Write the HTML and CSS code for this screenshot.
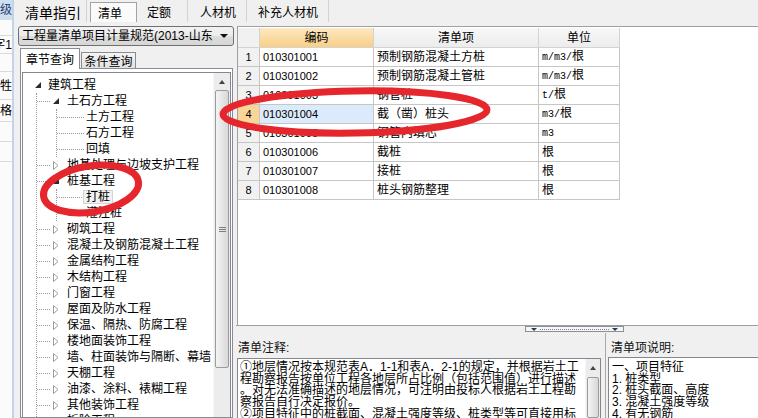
FILE: index.html
```html
<!DOCTYPE html>
<html lang="zh-CN">
<head>
<meta charset="utf-8">
<title>清单</title>
<link rel="stylesheet" href="styles.css">
</head>
<body>
<div class="app">
  <div class="stub">
    <div class="stub-cell s-top">级</div>
    <div class="stub-cell s-a"></div>
    <div class="stub-cell s-b">字1</div>
    <div class="stub-cell s-c"></div>
    <div class="stub-cell s-d">牲</div>
    <div class="stub-cell s-e">格</div>
    <div class="stub-cell s-f"></div>
    <div class="stub-cell s-f"></div>
  </div>
  <div class="main">
    <div class="tabbar">
      <div class="tab t1">清单指引</div>
      <div class="tab t2 active">清单</div>
      <div class="tab t3">定额</div>
      <div class="tab t4">人材机</div>
      <div class="tab t5">补充人材机</div>
    </div>
    <div class="content">
      <div class="left">
        <div class="combo"><span class="combo-text">工程量清单项目计量规范(2013-山东</span><span class="combo-arrow"></span></div>
        <div class="qtabs"><div class="qtab active">章节查询</div><div class="qtab">条件查询</div></div>
        <div class="tabpage">
          <div class="tree">
            <div class="tree-body">
              <div class="node l1"><span class="exp"><span class="tri-open"></span></span><span class="lbl">建筑工程</span></div>
              <div class="kids k1">
                <div class="node l2"><span class="hconn"></span><span class="exp"><span class="tri-open"></span></span><span class="lbl">土石方工程</span></div>
                <div class="kids k2">
                  <div class="node l3"><span class="conn"></span><span class="lbl">土方工程</span></div>
                  <div class="node l3"><span class="conn"></span><span class="lbl">石方工程</span></div>
                  <div class="node l3"><span class="conn"></span><span class="lbl">回填</span></div>
                </div>
                <div class="node l2"><span class="hconn"></span><span class="exp"><svg width="6" height="9" viewBox="0 0 6 9"><polygon points="0.5,0.5 5,4.5 0.5,8.5" fill="#fff" stroke="#9b9b9b"/></svg></span><span class="lbl">地基处理与边坡支护工程</span></div>
                <div class="node l2"><span class="hconn"></span><span class="exp"><span class="tri-open"></span></span><span class="lbl">桩基工程</span></div>
                <div class="kids k2">
                  <div class="node l3"><span class="conn"></span><span class="lbl sel">打桩</span></div>
                  <div class="node l3"><span class="conn"></span><span class="lbl">灌注桩</span></div>
                </div>
                <div class="node l2"><span class="hconn"></span><span class="exp"><svg width="6" height="9" viewBox="0 0 6 9"><polygon points="0.5,0.5 5,4.5 0.5,8.5" fill="#fff" stroke="#9b9b9b"/></svg></span><span class="lbl">砌筑工程</span></div>
                <div class="node l2"><span class="hconn"></span><span class="exp"><svg width="6" height="9" viewBox="0 0 6 9"><polygon points="0.5,0.5 5,4.5 0.5,8.5" fill="#fff" stroke="#9b9b9b"/></svg></span><span class="lbl">混凝土及钢筋混凝土工程</span></div>
                <div class="node l2"><span class="hconn"></span><span class="exp"><svg width="6" height="9" viewBox="0 0 6 9"><polygon points="0.5,0.5 5,4.5 0.5,8.5" fill="#fff" stroke="#9b9b9b"/></svg></span><span class="lbl">金属结构工程</span></div>
                <div class="node l2"><span class="hconn"></span><span class="exp"><svg width="6" height="9" viewBox="0 0 6 9"><polygon points="0.5,0.5 5,4.5 0.5,8.5" fill="#fff" stroke="#9b9b9b"/></svg></span><span class="lbl">木结构工程</span></div>
                <div class="node l2"><span class="hconn"></span><span class="exp"><svg width="6" height="9" viewBox="0 0 6 9"><polygon points="0.5,0.5 5,4.5 0.5,8.5" fill="#fff" stroke="#9b9b9b"/></svg></span><span class="lbl">门窗工程</span></div>
                <div class="node l2"><span class="hconn"></span><span class="exp"><svg width="6" height="9" viewBox="0 0 6 9"><polygon points="0.5,0.5 5,4.5 0.5,8.5" fill="#fff" stroke="#9b9b9b"/></svg></span><span class="lbl">屋面及防水工程</span></div>
                <div class="node l2"><span class="hconn"></span><span class="exp"><svg width="6" height="9" viewBox="0 0 6 9"><polygon points="0.5,0.5 5,4.5 0.5,8.5" fill="#fff" stroke="#9b9b9b"/></svg></span><span class="lbl">保温、隔热、防腐工程</span></div>
                <div class="node l2"><span class="hconn"></span><span class="exp"><svg width="6" height="9" viewBox="0 0 6 9"><polygon points="0.5,0.5 5,4.5 0.5,8.5" fill="#fff" stroke="#9b9b9b"/></svg></span><span class="lbl">楼地面装饰工程</span></div>
                <div class="node l2"><span class="hconn"></span><span class="exp"><svg width="6" height="9" viewBox="0 0 6 9"><polygon points="0.5,0.5 5,4.5 0.5,8.5" fill="#fff" stroke="#9b9b9b"/></svg></span><span class="lbl">墙、柱面装饰与隔断、幕墙</span></div>
                <div class="node l2"><span class="hconn"></span><span class="exp"><svg width="6" height="9" viewBox="0 0 6 9"><polygon points="0.5,0.5 5,4.5 0.5,8.5" fill="#fff" stroke="#9b9b9b"/></svg></span><span class="lbl">天棚工程</span></div>
                <div class="node l2"><span class="hconn"></span><span class="exp"><svg width="6" height="9" viewBox="0 0 6 9"><polygon points="0.5,0.5 5,4.5 0.5,8.5" fill="#fff" stroke="#9b9b9b"/></svg></span><span class="lbl">油漆、涂料、裱糊工程</span></div>
                <div class="node l2"><span class="hconn"></span><span class="exp"><svg width="6" height="9" viewBox="0 0 6 9"><polygon points="0.5,0.5 5,4.5 0.5,8.5" fill="#fff" stroke="#9b9b9b"/></svg></span><span class="lbl">其他装饰工程</span></div>
                <div class="node l2"><span class="hconn"></span><span class="exp"><svg width="6" height="9" viewBox="0 0 6 9"><polygon points="0.5,0.5 5,4.5 0.5,8.5" fill="#fff" stroke="#9b9b9b"/></svg></span><span class="lbl">拆除工程</span></div>
              </div>
            </div>
            <div class="vscroll tree-sb">
              <div class="sb-btn"><span class="up"></span></div>
              <div class="sb-thumb tree-thumb"><span class="grip"></span></div>
              <div class="sb-track"></div>
            </div>
          </div>
        </div>
      </div>
      <div class="right">
        <div class="grid-area">
          <table class="grid">
            <colgroup><col class="c0"><col class="c1"><col class="c2"><col class="c3"></colgroup>
            <thead>
              <tr><th class="rn"></th><th class="hl">编码</th><th>清单项</th><th>单位</th></tr>
            </thead>
            <tbody>
              <tr><td class="rn">1</td><td class="code">010301001</td><td>预制钢筋混凝土方桩</td><td><span class="mono">m/m3/</span>根</td></tr>
              <tr><td class="rn">2</td><td class="code">010301002</td><td>预制钢筋混凝土管桩</td><td><span class="mono">m/m3/</span>根</td></tr>
              <tr><td class="rn">3</td><td class="code">010301003</td><td>钢管桩</td><td><span class="mono">t/</span>根</td></tr>
              <tr class="cur"><td class="rn">4</td><td class="code">010301004</td><td>截（凿）桩头</td><td><span class="mono">m3/</span>根</td></tr>
              <tr><td class="rn">5</td><td class="code">010301005</td><td>钢管内填芯</td><td><span class="mono">m3</span></td></tr>
              <tr><td class="rn">6</td><td class="code">010301006</td><td>截桩</td><td>根</td></tr>
              <tr><td class="rn">7</td><td class="code">010301007</td><td>接桩</td><td>根</td></tr>
              <tr><td class="rn">8</td><td class="code">010301008</td><td>桩头钢筋整理</td><td>根</td></tr>
            </tbody>
          </table>
        </div>
        <div class="splitter">
          <div class="handle"><span class="down"></span><span class="dots"></span><span class="down"></span></div>
        </div>
        <div class="notes">
          <div class="note-left">
            <div class="note-label">清单注释:</div>
            <div class="note-box">
              <div class="note-text">
                <div>①地层情况按本规范表A．1-1和表A．2-1的规定，并根据岩土工</div>
                <div>程勘察报告按单位工程各地层所占比例（包括范围值）进行描述</div>
                <div>。对无法准确描述的地层情况，可注明由投标人根据岩土工程勘</div>
                <div>察报告自行决定报价。</div>
                <div>②项目特征中的桩截面、混凝土强度等级、桩类型等可直接用标</div>
              </div>
              <div class="vscroll note-sb">
                <div class="sb-btn"><span class="up"></span></div>
                <div class="sb-thumb note-thumb"></div>
              </div>
            </div>
          </div>
          <div class="note-right">
            <div class="note-label r">清单项说明:</div>
            <div class="note-box r">
              <div class="note-text">
                <div>一、项目特征</div>
                <div>1. 桩类型</div>
                <div>2. 桩头截面、高度</div>
                <div>3. 混凝土强度等级</div>
                <div>4. 有无钢筋</div>
              </div>
            </div>
          </div>
        </div>
      </div>
    </div>
  </div>
</div>
<svg class="marks" width="758" height="418" viewBox="0 0 758 418">
  <ellipse cx="355" cy="112" rx="132" ry="21" fill="none" stroke="#e6262d" stroke-width="7" transform="rotate(-1 355 112)"/>
  <ellipse cx="91" cy="189" rx="48" ry="23" fill="none" stroke="#e6262d" stroke-width="7" transform="rotate(-9 91 189)"/>
</svg>
</body>
</html>
```

FILE: styles.css
```css
* { box-sizing: border-box; margin: 0; padding: 0; }
html, body { width: 758px; height: 418px; overflow: hidden; }
body {
  position: relative;
  background: #f0f0f0;
  font-family: "Liberation Sans", "Noto Sans CJK SC", sans-serif;
  font-size: 12px;
  color: #000;
}
.app { display: flex; width: 758px; height: 418px; }

/* left stub of another panel */
.stub {
  width: 14px; flex: none;
  background: #fbfbfb;
  border-right: 2px solid #c4d3e7;
  display: flex; flex-direction: column;
  overflow: hidden;
}
.stub-cell {
  display: flex; align-items: center; justify-content: flex-end;
  white-space: nowrap; overflow: hidden;
  border-bottom: 1px solid #dadada;
  font-size: 12px; line-height: 14px;
  flex: none;
}
.s-top { height: 20px; background: #cfdff2; color: #1f3d6e; }
.s-a { height: 16px; }
.s-b { height: 18px; }
.s-c { height: 18px; }
.s-d { height: 28px; }
.s-e { height: 22px; }
.s-f { height: 20px; }

.main { flex: 1; min-width: 0; display: flex; flex-direction: column; }

/* top tabs */
.tabbar { height: 22px; flex: none; display: flex; }
.tab {
  display: flex; align-items: center;
  border-right: 1px solid #d3d3d3;
  font-size: 12px; white-space: nowrap;
  padding-top: 1px;
}
.t1 { width: 73px; padding-left: 11px; font-size: 14px; margin-right: 3px; }
.t2 { width: 47px; padding-left: 7px; }
.t3 { width: 51px; padding-left: 10px; }
.t4 { width: 59px; padding-left: 12px; }
.t5 { width: 82px; padding-left: 11px; }
.tab.active {
  margin-top: 2px;
  background: #fafafa;
  border: 1px solid #a2a2a2;
  border-bottom: none;
  padding-top: 0;
}

.content { flex: 1; min-height: 0; display: flex; }

/* left column */
.left {
  width: 222px; flex: none;
  display: flex; flex-direction: column;
  padding-left: 4px;
}
.combo {
  margin-top: 4px; height: 20px; width: 216px; flex: none;
  border: 1px solid #707070; border-radius: 3px;
  background: linear-gradient(#f3f3f3, #ebebeb 50%, #dddddd 51%, #d6d6d6);
  display: flex; align-items: center;
  padding-left: 3px;
  white-space: nowrap; overflow: hidden;
}
.combo-text { flex: 1; overflow: hidden; font-size: 12px; line-height: 14px; }
.combo-arrow {
  flex: none; width: 0; height: 0;
  margin: 0 5px 0 4px;
  border-left: 4px solid transparent;
  border-right: 4px solid transparent;
  border-top: 4px solid #111;
}
.qtabs {
  margin-top: 2px; margin-left: 2px; height: 20px; flex: none;
  display: flex; align-items: flex-end;
}
.qtab {
  height: 16px; width: 55px; margin-left: 1px;
  border: 1px solid #898c95; border-bottom: none;
  background: linear-gradient(#f4f4f4, #e2e2e2);
  display: flex; align-items: center; justify-content: center;
  font-size: 12px;
}
.qtab.active {
  width: 60px; height: 21px; margin-left: 0; margin-bottom: -1px;
  background: #fff;
  position: relative; z-index: 1;
  padding-bottom: 1px;
}
.tabpage {
  flex: 1; min-height: 0;
  margin-left: 2px; width: 213px;
  border: 1px solid #898c95;
  background: #fff;
  padding: 3px 1px 0 1px;
  display: flex;
}
.tree {
  flex: 1; min-height: 0;
  border: 1px solid #828790;
  border-bottom: none;
  display: flex;
  overflow: hidden;
}
.tree-body {
  flex: 1; min-width: 0;
  padding-top: 4px;
  overflow: hidden; white-space: nowrap;
}
.node { height: 16px; display: flex; align-items: center; font-size: 12px; line-height: 16px; }
.exp { width: 12px; height: 16px; flex: none; display: flex; align-items: center; justify-content: center; }
.tri-open {
  width: 0; height: 0;
  border-left: 6px solid transparent;
  border-bottom: 6px solid #2b2b2b;
}
.lbl { white-space: nowrap; }
.l1 { padding-left: 9px; }
.l1 .lbl { margin-left: 4px; }
.kids { flex: none; }
.k1 { margin-left: 13px; border-left: 1px dotted #9a9a9a; }
.hconn { width: 13px; height: 0; border-top: 1px dotted #9a9a9a; flex: none; }
.l2 .lbl { margin-left: 5px; }
.k2 { margin-left: 19px; border-left: 1px dotted #9a9a9a; }
.conn { width: 27px; height: 0; border-top: 1px dotted #9a9a9a; flex: none; }
.l3 .lbl { margin-left: 2px; }
.lbl.sel {
  margin-left: -1px;
  padding: 0 2px;
  line-height: 12px;
  border: 1px solid #d4d4d4;
  background: #f2f2f2;
}

/* scrollbars */
.vscroll {
  flex: none;
  display: flex; flex-direction: column;
  background: #ececec;
  border-left: 1px solid #f7f7f7;
}
.tree-sb { width: 17px; }
.sb-btn {
  height: 17px; flex: none;
  display: flex; align-items: center; justify-content: center;
}
.up {
  width: 0; height: 0;
  border-left: 3px solid transparent;
  border-right: 3px solid transparent;
  border-bottom: 4px solid #444;
}
.sb-thumb {
  flex: none;
  margin: 0 1px;
  border: 1px solid #9c9c9c;
  border-radius: 2px;
  background: linear-gradient(90deg, #f4f4f4, #e6e6e6 50%, #d8d8d8);
  display: flex; align-items: center; justify-content: center;
}
.tree-thumb { height: 278px; }
.grip {
  width: 7px; height: 5px;
  border-top: 1px solid #7e7e7e;
  border-bottom: 1px solid #7e7e7e;
  background: linear-gradient(#7e7e7e, #7e7e7e) center / 100% 1px no-repeat;
}
.sb-track { flex: 1; }

/* right column */
.right { flex: 1; min-width: 0; display: flex; flex-direction: column; }
.grid-area {
  margin-top: 4px; margin-left: 1px;
  height: 299px; flex: none;
  border-top: 1px solid #a0a0a0;
  border-left: 1px solid #a0a0a0;
  background: #fff;
  overflow: hidden;
}
.grid {
  margin-top: 1px;
  border-collapse: separate; border-spacing: 0;
  table-layout: fixed; width: 382px;
}
.c0 { width: 22px; }
.c1 { width: 114px; }
.c2 { width: 165px; }
.c3 { width: 81px; }
.grid th, .grid td {
  border-right: 1px solid #c6c6c6;
  border-bottom: 1px solid #c6c6c6;
  padding: 0 0 0 3px;
  white-space: nowrap; overflow: hidden;
  font-weight: normal; text-align: left;
  font-size: 12px; line-height: 16px;
}
.grid thead tr { height: 20px; }
.grid th {
  text-align: center; padding: 0;
  background: linear-gradient(#f8f8f8, #ececec);
  border-color: #d3d3d3;
}
.grid th.hl { background: linear-gradient(#fde8c0, #f8cf88); }
.grid tbody tr { height: 19px; }
.grid .rn { background: #f1f1f1; text-align: center; padding: 0; font-size: 11px; }
.grid .code { font-size: 11px; }
.mono { font-family: "Liberation Mono", monospace; font-size: 10px; }
.grid tr.cur td.rn { background: #f9d697; }
.grid tr.cur td.code { background: #dcebfb; }

/* splitter */
.splitter {
  height: 8px; flex: none;
  border-top: 1px solid #a0a0a0;
  padding-left: 289px;
}
.handle {
  width: 99px; height: 6px;
  border: 1px solid #8f8f8f;
  background: #f6f6f6;
  display: flex; align-items: center;
  padding: 0 5px;
}
.down {
  width: 0; height: 0; flex: none;
  border-left: 3px solid transparent;
  border-right: 3px solid transparent;
  border-top: 3px solid #1f3b6b;
}
.dots { flex: 1; height: 0; margin: 0 3px; border-top: 1px dotted #6b7fa6; }

/* notes */
.notes { flex: 1; min-height: 0; display: flex; }
.note-left { width: 369px; flex: none; display: flex; flex-direction: column; padding-left: 1px; }
.note-right {
  flex: 1; min-width: 0;
  border-left: 1px solid #a8a8a8;
  display: flex; flex-direction: column;
  padding-left: 2px;
}
.note-label {
  height: 25px; flex: none;
  padding: 6px 0 0 1px;
  font-size: 12px; line-height: 19px;
  color: #111;
}
.note-label.r { height: 24px; padding-left: 3px; }
.note-box {
  flex: 1; min-height: 0;
  width: 364px;
  border: 1px solid #828790; border-bottom: none;
  background: #fff;
  display: flex;
  overflow: hidden;
}
.note-box.r { width: auto; border-right: none; }
.note-text {
  flex: 1; min-width: 0;
  padding: 3px 0 0 2px;
  font-size: 12px; line-height: 11.7px;
  white-space: nowrap; overflow: hidden;
}
.note-box.r .note-text { padding-left: 3px; padding-top: 4px; }
.note-sb { width: 15px; }
.note-thumb { flex: 1; margin-top: 1px; }

/* hand-drawn red annotation marks over the screenshot */
.marks { position: absolute; left: 0; top: 0; pointer-events: none; }
```
